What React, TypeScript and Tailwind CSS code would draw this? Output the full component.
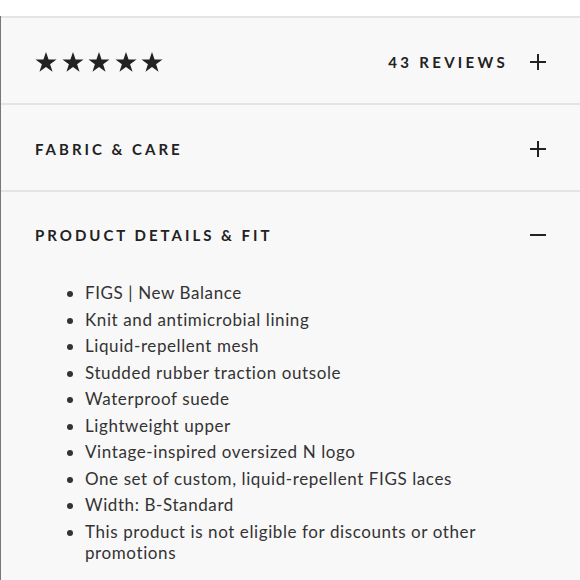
import React from 'react';

const details = [
  'FIGS | New Balance',
  'Knit and antimicrobial lining',
  'Liquid-repellent mesh',
  'Studded rubber traction outsole',
  'Waterproof suede',
  'Lightweight upper',
  'Vintage-inspired oversized N logo',
  'One set of custom, liquid-repellent FIGS laces',
  'Width: B-Standard',
  'This product is not eligible for discounts or other promotions',
];

function Star() {
  return (
    <svg width="22" height="21" viewBox="0 0 24 23" className="fill-[#222]">
      <path d="M12 0l2.83 8.26H23.5l-7.01 5.1 2.68 8.3L12 16.55l-7.17 5.11 2.68-8.3L.5 8.26h8.67z" />
    </svg>
  );
}

function Plus() {
  return (
    <svg width="18" height="18" viewBox="0 0 18 18" className="stroke-[#222]" strokeWidth="2">
      <path d="M9 1v16M1 9h16" />
    </svg>
  );
}

function Minus() {
  return (
    <svg width="18" height="18" viewBox="0 0 18 18" className="stroke-[#222]" strokeWidth="2">
      <path d="M1 9h16" />
    </svg>
  );
}

export default function App() {
  return (
    <div className="w-[580px] h-[580px] overflow-hidden bg-white font-['Lato',sans-serif] text-[#222]">
      <div className="h-[16px] bg-white" />
      <div className="border-l border-[#777] bg-[#f8f8f8] h-[564px]">
        <div className="border-t-2 border-[#e4e4e4]" />
        <div className="flex items-center justify-between h-[87px] pt-[3px] pl-[34px] pr-[33px] border-b-2 border-[#e4e4e4]">
          <div className="flex gap-[4.5px]">
            <Star />
            <Star />
            <Star />
            <Star />
            <Star />
          </div>
          <div className="flex items-center gap-[21px]">
            <span className="text-[15px] font-bold tracking-[0.22em]">43 REVIEWS</span>
            <Plus />
          </div>
        </div>
        <div className="flex items-center justify-between h-[87px] pt-[3px] pl-[34px] pr-[33px] border-b-2 border-[#e4e4e4]">
          <span className="text-[15px] font-bold tracking-[0.2em]">FABRIC &amp; CARE</span>
          <Plus />
        </div>
        <div className="pl-[34px] pr-[33px] pt-[31px]">
          <div className="flex items-center justify-between h-[24px]">
            <span className="text-[15px] font-bold tracking-[0.2em]">PRODUCT DETAILS &amp; FIT</span>
            <Minus />
          </div>
          <ul className="list-disc pl-[50px] mt-[35px] text-[17px] leading-[21px] tracking-[0.035em] text-[#333]">
            {details.map((d) => (
              <li key={d} className="mb-[5.5px]">{d}</li>
            ))}
          </ul>
        </div>
      </div>
    </div>
  );
}
